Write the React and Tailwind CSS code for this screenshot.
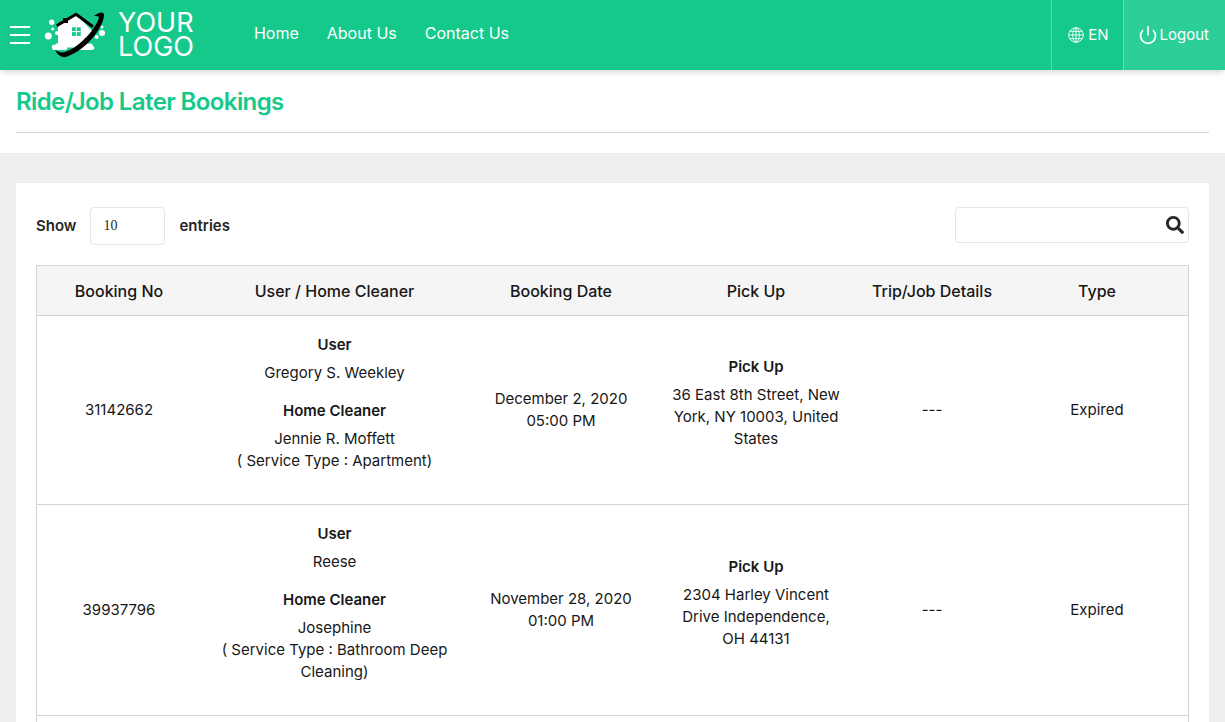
import React from "react";
import { Power } from "lucide-react";
import { FaSearch } from "react-icons/fa";

const columns = "grid grid-cols-[164px_267px_186px_204px_148px_1fr]";

const bookings = [
  {
    no: "31142662",
    user: "Gregory S. Weekley",
    cleaner: "Jennie R. Moffett",
    service: "( Service Type : Apartment)",
    date: "December 2, 2020",
    time: "05:00 PM",
    address: "36 East 8th Street, New York, NY 10003, United States",
  },
  {
    no: "39937796",
    user: "Reese",
    cleaner: "Josephine",
    service: "( Service Type : Bathroom Deep Cleaning)",
    date: "November 28, 2020",
    time: "01:00 PM",
    address: "2304 Harley Vincent Drive Independence, OH 44131",
  },
];

const LogoMark = () => (
  <svg className="h-14 w-16" viewBox="0 0 64 56" fill="none">
    {/* bubbles */}
    <circle cx="7.700" cy="15.300" r="2.700" fill="#fff" />
    <circle cx="4.300" cy="29" r="3.500" fill="#fff" />
    <circle cx="13" cy="26" r="2" fill="#fff" />
    <circle cx="8.700" cy="22" r="1.500" fill="#fff" />
    <circle cx="52.700" cy="30" r="2" fill="#fff" />
    <circle cx="58" cy="26" r="3" fill="#fff" />
    <circle cx="58" cy="20" r="1.500" fill="#fff" />
    {/* house */}
    <path d="M32.700 8 14 19v21l25 1 10-16z" fill="#fff" />
    <path d="M12.700 18.700 32 7.300l17 12.400" stroke="#000" strokeWidth="3" strokeLinejoin="round" />
    <path d="M19 11h5v5h-5z" fill="#000" />
    <path d="M28 20.300h8.700V29H28z" fill="#15c98b" />
    <path d="M32.300 20.300V29M28 24.600h8.700" stroke="#fff" strokeWidth="1" />
    {/* foam */}
    <path d="M8 41c-1-2 1-4 3-3 1-2 4-3 6-1 2-1 5 0 5 2 2 1 2 4-1 4H10c-1 0-2-1-2-2z" fill="#fff" />
    <path d="M33 41c0-2 2-3 4-2 1-3 5-4 7-2 3-1 5 0 5 2 2 1 2 4-1 4H35c-1 0-2-1-2-2z" fill="#fff" />
    {/* swoosh */}
    <path
      d="M50 9C55 5 60 4 60 8 60 18 45 42 22 50 17 51 13 47 11 43 15 45 18 46 21 45 38 39 52 20 55 11 55 9 53 9 50 9z"
      fill="#000"
    />
  </svg>
);

const GlobeIcon = () => (
  <svg className="h-4 w-4" viewBox="0 0 22 22" fill="none" stroke="currentColor" strokeWidth="1.200">
    <circle cx="11" cy="11" r="10" />
    <ellipse cx="11" cy="11" rx="4.500" ry="10" />
    <path d="M11 1v20M1 11h20M2.500 6h17M2.500 16h17" />
  </svg>
);

const Header = () => (
  <header className="relative z-10 flex h-17.5 shrink-0 items-center bg-[#15c98b] text-white shadow-md">
    <button type="button" className="ml-2.5 flex w-5 flex-col gap-1.5">
      <span className="h-0.5 bg-white" />
      <span className="h-0.5 bg-white" />
      <span className="h-0.5 bg-white" />
    </button>
    <div className="ml-3.5 flex items-center gap-2.5">
      <LogoMark />
      <div className="text-[27px] leading-6">
        <p>YOUR</p>
        <p>LOGO</p>
      </div>
    </div>
    <nav className="ml-15 flex gap-7 pb-1 text-base">
      <a href="#">Home</a>
      <a href="#">About Us</a>
      <a href="#">Contact Us</a>
    </nav>
    <div className="ml-auto flex h-full">
      <div className="flex items-center gap-1 border-l border-white/30 pr-3.5 pl-4">
        <GlobeIcon />
        EN
      </div>
      <div className="flex items-center gap-0.5 border-l border-white/30 bg-white/10 pr-4 pl-3.5">
        <Power className="h-5 w-5" strokeWidth={2} />
        Logout
      </div>
    </div>
  </header>
);

const BookingRow = ({ booking }) => (
  <div className={`${columns} items-center border-t border-neutral-300 text-center text-neutral-900`}>
    <p>{booking.no}</p>
    <div className="px-4 pt-4.5 pb-8">
      <p className="font-semibold">User</p>
      <p className="mt-1.5">{booking.user}</p>
      <p className="mt-4 font-semibold">Home Cleaner</p>
      <p className="mt-1.5">{booking.cleaner}</p>
      <p>{booking.service}</p>
    </div>
    <p className="px-4">
      {booking.date}
      <br />
      {booking.time}
    </p>
    <div className="px-4 pb-3.5">
      <p className="font-semibold">Pick Up</p>
      <p className="mt-1.5">{booking.address}</p>
    </div>
    <p>---</p>
    <p>Expired</p>
  </div>
);

export default function App() {
  return (
    <div className="flex h-screen flex-col overflow-hidden bg-[#eeeeee] font-['Inter',sans-serif] text-[15px] leading-5.5">
      <Header />

      <div className="shrink-0 bg-white px-4 pt-4 pb-5">
        <h1 className="border-b border-neutral-300 pb-3.5 text-2xl font-semibold tracking-tight text-[#15c98b]">
          Ride/Job Later Bookings
        </h1>
      </div>

      <main className="mx-4 mt-7.5 shrink-0 bg-white px-5 pt-6">
        <div className="flex items-start justify-between font-semibold text-neutral-800">
          <div className="flex items-center gap-3.5">
            <span>Show</span>
            <div className="flex h-9.5 w-[75px] items-center rounded border border-neutral-200 px-3 font-['Liberation_Serif',serif] text-sm font-normal">
              10
            </div>
            <span>entries</span>
          </div>
          <div className="flex h-9 w-[234px] items-center justify-end rounded border border-neutral-200 px-1">
            <FaSearch className="h-4.5 w-4.5" />
          </div>
        </div>

        <div className="mt-5 border border-neutral-300">
          <div className={`${columns} h-12.25 items-center bg-neutral-100 text-center text-base font-medium text-neutral-900`}>
            <p>Booking No</p>
            <p>User / Home Cleaner</p>
            <p>Booking Date</p>
            <p>Pick Up</p>
            <p>Trip/Job Details</p>
            <p>Type</p>
          </div>
          {bookings.map((booking) => (
            <BookingRow key={booking.no} booking={booking} />
          ))}
          <div className="h-20 border-t border-neutral-300" />
        </div>
      </main>
    </div>
  );
}
